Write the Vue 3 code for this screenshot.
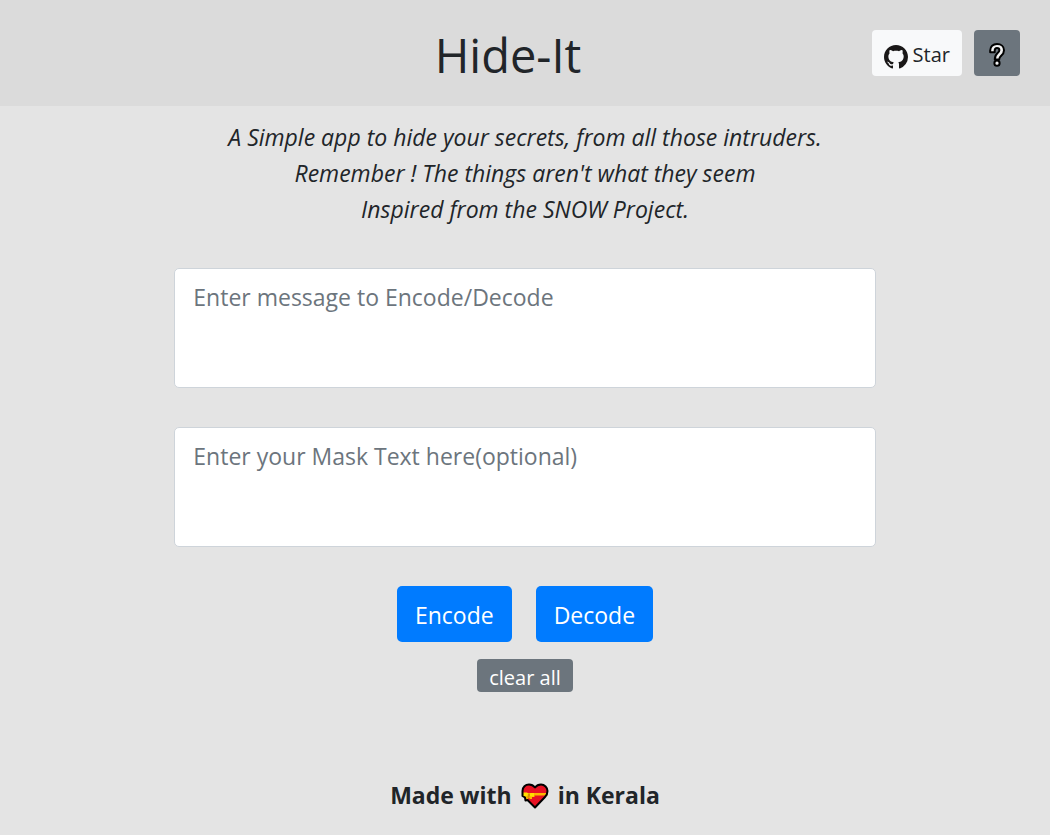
<script setup>
import { ref } from 'vue'

const message = ref('')
const mask = ref('')

function clearAll() {
  message.value = ''
  mask.value = ''
}
</script>

<template>
  <div class="page">
    <header class="header">
      <h1 class="title">Hide-It</h1>
      <div class="actions">
        <a class="star" href="#star">
          <svg class="github" viewBox="0 0 16 16" aria-hidden="true">
            <path d="M8 0C3.58 0 0 3.58 0 8c0 3.54 2.29 6.53 5.47 7.59.4.07.55-.17.55-.38 0-.19-.01-.82-.01-1.49-2.01.37-2.53-.49-2.69-.94-.09-.23-.48-.94-.82-1.13-.28-.15-.68-.52-.01-.53.63-.01 1.08.58 1.23.82.72 1.21 1.87.87 2.33.66.07-.52.28-.87.51-1.07-1.78-.2-3.64-.89-3.64-3.95 0-.87.31-1.59.82-2.15-.08-.2-.36-1.02.08-2.12 0 0 .67-.21 2.2.82.64-.18 1.32-.27 2-.27s1.36.09 2 .27c1.53-1.04 2.2-.82 2.2-.82.44 1.1.16 1.92.08 2.12.51.56.82 1.27.82 2.15 0 3.07-1.87 3.75-3.65 3.95.29.25.54.73.54 1.48 0 1.07-.01 1.93-.01 2.2 0 .21.15.46.55.38A8.01 8.01 0 0 0 16 8c0-4.42-3.58-8-8-8z" />
          </svg>
          <span>Star</span>
        </a>
        <button class="help" type="button" aria-label="Help">
          <svg class="question" viewBox="0 0 16 24" aria-hidden="true">
            <g stroke-linejoin="round">
              <path class="outline" d="M1.200 9.200V7.500C1.200 3.700 4 1 8 1s7 2.500 7 6.200c0 2.700-1.200 4.200-2.800 5.600-1.300 1.200-2 1.700-2 3.700H5.800c0-3.200.9-4.700 2.600-6.200 1.400-1.200 2-1.800 2-3 0-1.300-.9-2.200-2.400-2.200S5.700 6.200 5.700 7.700v1.500z" />
              <circle class="outline" cx="8" cy="20.200" r="2.600" />
            </g>
          </svg>
        </button>
      </div>
    </header>

    <main class="main">
      <p class="intro">
        A Simple app to hide your secrets, from all those intruders.<br />
        Remember ! The things aren't what they seem<br />
        Inspired from the SNOW Project.
      </p>
      <textarea v-model="message" class="field" aria-label="Message" placeholder="Enter message to Encode/Decode"></textarea>
      <textarea v-model="mask" class="field" aria-label="Mask text" placeholder="Enter your Mask Text here(optional)"></textarea>
      <div class="buttons">
        <button class="primary" type="button">Encode</button>
        <button class="primary" type="button">Decode</button>
      </div>
      <button class="clear" type="button" @click="clearAll">clear all</button>
    </main>

    <footer class="footer">
      <span>Made with</span>
      <svg class="heart" viewBox="0 0 28 26" role="img" aria-label="love">
        <path fill="#e81224" d="M14 24.500 6.500 17l-2 .5-.5-3-2.500-1.500V8C1.500 4 4.500 1.500 8 1.500c2.500 0 4.500 1 6 3 1.500-2 3.500-3 6-3 3.500 0 6.500 3 6.500 6.500 0 2.500-1 4.500-2.500 6z" />
        <path fill="#fcb900" d="M2 10h24.500v2.500H13.500V14H11v2H8.500v-1.500L5.500 17l-1-3H2z" />
        <path fill="#ffe000" d="M2 9.500h4l2 1.500 2-1h3v3.500h-3L8 12.500 5.500 13H2z" />
        <path fill="#d99000" d="M7 10.500h2v2.500L7.500 15H6.500z" />
        <path fill="none" stroke="#000" stroke-width="2" stroke-linejoin="round" d="M14 24.500 6.500 17l-2 .5-.5-3-2.500-1.500V8C1.500 4 4.500 1.500 8 1.500c2.500 0 4.500 1 6 3 1.500-2 3.500-3 6-3 3.500 0 6.500 3 6.500 6.500 0 2.500-1 4.500-2.500 6z" />
      </svg>
      <span>in Kerala</span>
    </footer>
  </div>
</template>

<style>
body {
  background: #e4e4e4;
}
</style>

<style scoped>
.page {
  box-sizing: border-box;
  display: flex;
  flex-direction: column;
  min-height: 100vh;
  color: #212529;
  font-family: "Open Sans", sans-serif;
  font-size: 23px;
  line-height: 36px;
}

.header {
  box-sizing: border-box;
  display: grid;
  grid-template-columns: 1fr auto 1fr;
  align-items: center;
  min-height: 106px;
  padding-right: 30px;
  background: #dbdbdb;
}

.title {
  grid-column: 2;
  margin: 0 4px 0 0;
  padding-top: 4px;
  font-size: 47px;
  font-weight: 400;
  line-height: 56px;
}

.actions {
  display: flex;
  justify-content: flex-end;
  gap: 12px;
}

.star,
.help {
  box-sizing: border-box;
  display: flex;
  align-items: center;
  justify-content: center;
  height: 46px;
  border: 0;
  border-radius: 4px;
}

.star {
  gap: 5px;
  padding: 4px 12px 0;
  background: #f8f9fa;
  color: #212529;
  font-size: 20px;
  text-decoration: none;
}

.github {
  width: 24px;
  height: 24px;
  margin-top: 4px;
  fill: #191717;
}

.help {
  width: 46px;
  padding: 4px 0 0;
  background: #6c757d;
}

.question {
  width: 16px;
  height: 24px;
}

.outline {
  fill: #f2f2f2;
  stroke: #000;
  stroke-width: 2;
}

.main {
  display: flex;
  flex-direction: column;
  align-items: center;
  padding-top: 13px;
}

.intro {
  margin: 0 0 41px;
  font-style: italic;
  text-align: center;
}

.field {
  box-sizing: border-box;
  width: 66.8%;
  height: 120px;
  margin: 0 0 39px;
  padding: 10px 18px;
  border: 1px solid #ced4da;
  border-radius: 5px;
  background: #fff;
  color: #495057;
  font: inherit;
  resize: none;
}

.field::placeholder {
  color: #6c757d;
  opacity: 1;
}

.buttons {
  display: flex;
  gap: 24px;
}

.primary,
.clear {
  border: 0;
  color: #fff;
  font-family: inherit;
}

.primary {
  height: 56px;
  padding: 2px 18px 0;
  border-radius: 5px;
  background: #007bff;
  font-size: 23px;
}

.clear {
  height: 33px;
  margin-top: 17px;
  padding: 4px 12px 0;
  border-radius: 4px;
  background: #6c757d;
  font-size: 20px;
  line-height: 28px;
}

.footer {
  display: flex;
  justify-content: center;
  align-items: center;
  gap: 8px;
  margin-top: auto;
  padding: 40px 0 22px;
  font-weight: 700;
}

.heart {
  width: 30px;
  height: 26px;
  margin-top: 2px;
}
</style>
